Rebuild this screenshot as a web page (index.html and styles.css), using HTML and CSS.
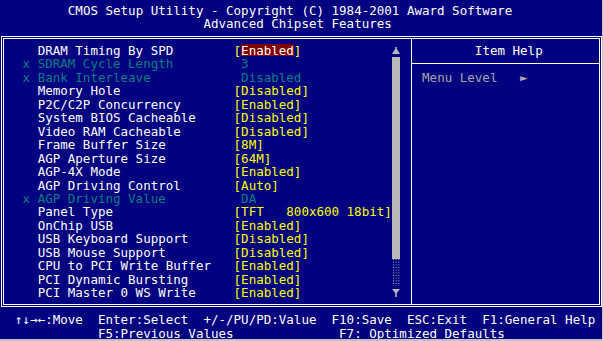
FILE: index.html
```html
<!DOCTYPE html>
<html>
<head>
<meta charset="utf-8">
<link rel="stylesheet" href="styles.css">
</head>
<body>
<div class="screen">
  <div class="t1">CMOS Setup Utility - Copyright (C) 1984-2001 Award Software</div>
  <div class="t2">Advanced Chipset Features</div>
  <div class="frame">
    <div class="list-panel">
      <div class="items">
        <div class="item"><span class="mk"></span><span>DRAM Timing By SPD</span><span class="val">[<span class="hl">Enabled</span>]</span></div>
        <div class="item dis"><span class="mk">x</span><span>SDRAM Cycle Length</span><span class="val off">3</span></div>
        <div class="item dis"><span class="mk">x</span><span>Bank Interleave</span><span class="val off">Disabled</span></div>
        <div class="item"><span class="mk"></span><span>Memory Hole</span><span class="val">[Disabled]</span></div>
        <div class="item"><span class="mk"></span><span>P2C/C2P Concurrency</span><span class="val">[Enabled]</span></div>
        <div class="item"><span class="mk"></span><span>System BIOS Cacheable</span><span class="val">[Disabled]</span></div>
        <div class="item"><span class="mk"></span><span>Video RAM Cacheable</span><span class="val">[Disabled]</span></div>
        <div class="item"><span class="mk"></span><span>Frame Buffer Size</span><span class="val">[8M]</span></div>
        <div class="item"><span class="mk"></span><span>AGP Aperture Size</span><span class="val">[64M]</span></div>
        <div class="item"><span class="mk"></span><span>AGP-4X Mode</span><span class="val">[Enabled]</span></div>
        <div class="item"><span class="mk"></span><span>AGP Driving Control</span><span class="val">[Auto]</span></div>
        <div class="item dis"><span class="mk">x</span><span>AGP Driving Value</span><span class="val off">DA</span></div>
        <div class="item"><span class="mk"></span><span>Panel Type</span><span class="val">[TFT   800x600 18bit]</span></div>
        <div class="item"><span class="mk"></span><span>OnChip USB</span><span class="val">[Enabled]</span></div>
        <div class="item"><span class="mk"></span><span>USB Keyboard Support</span><span class="val">[Disabled]</span></div>
        <div class="item"><span class="mk"></span><span>USB Mouse Support</span><span class="val">[Disabled]</span></div>
        <div class="item"><span class="mk"></span><span>CPU to PCI Write Buffer</span><span class="val">[Enabled]</span></div>
        <div class="item"><span class="mk"></span><span>PCI Dynamic Bursting</span><span class="val">[Enabled]</span></div>
        <div class="item"><span class="mk"></span><span>PCI Master 0 WS Write</span><span class="val">[Enabled]</span></div>
      </div>
      <div class="scroll">
        <div class="arrow"><svg width="8" height="7" viewBox="0 0 8 7"><polygon points="3.2,0 4.8,0 4.8,2 8,7 0,7 3.2,2" fill="#b8b8b8"/></svg></div>
        <div class="bar"></div>
        <div class="dots"><svg width="8" height="27" viewBox="0 0 8 27"><defs><pattern id="shade" x="1" y="0" width="2.67" height="2.67" patternUnits="userSpaceOnUse"><rect width="1" height="1" fill="#b8b8b8"/></pattern></defs><rect width="8" height="27" fill="url(#shade)"/></svg></div>
        <div class="arrow"><svg width="8" height="8" viewBox="0 0 8 8"><polygon points="0,0 8,0 4.8,4 4.8,8 3.2,8 3.2,4" fill="#b8b8b8"/></svg></div>
      </div>
    </div>
    <div class="help-panel">
      <div class="help-title">Item Help</div>
      <div class="help-rule"></div>
      <div class="help-text">Menu Level   ►</div>
    </div>
  </div>
  <div class="keys">
    <div class="keys-row"><span>↑↓→←:Move</span><span>Enter:Select</span><span>+/-/PU/PD:Value</span><span>F10:Save</span><span>ESC:Exit</span><span>F1:General Help</span></div>
    <div class="keys-row2"><span>F5:Previous Values</span><span>F7: Optimized Defaults</span></div>
  </div>
</div>
</body>
</html>
```

FILE: styles.css
```css
html {
  background: #c0c0c8;
}
body {
  margin: 0;
}
.screen {
  width: 602px;
  height: 339px;
  box-sizing: border-box;
  overflow: hidden;
  padding-top: 3.69px;
  background: #000080;
  color: #ffffff;
  font-family: "DejaVu Sans Mono", monospace;
  font-size: 12.52px;
  line-height: 13.46px;
}
.t1,
.t2,
.item span,
.help-text,
.keys span {
  white-space: pre;
}
.t1 {
  padding-left: 9ch;
}
.t2 {
  padding-left: 27ch;
}
.frame {
  display: grid;
  grid-template-columns: 407px 188px;
  width: 601px;
  height: 271px;
  box-sizing: border-box;
  border: 3px double #ffffff;
  margin: 5.39px 0 0 1px;
}
.list-panel {
  display: grid;
  grid-template-columns: 388px 8px;
  padding: 5.07px 11px 4.19px 0;
}
.item {
  display: grid;
  grid-template-columns: 2ch 26ch auto;
  padding-left: calc(3ch - 4px);
  height: 13.46px;
}
.item.dis {
  color: #008080;
}
.val {
  color: #ffff00;
}
.item.dis .val {
  color: #008080;
}
.val.off {
  padding-left: 1ch;
}
.hl {
  color: #ffffff;
  background: linear-gradient(#800000, #800000) 0 0.8px / 100% 12.4px no-repeat;
}
.scroll {
  display: flex;
  flex-direction: column;
}
.arrow {
  height: 13.46px;
  box-sizing: border-box;
  padding-top: 3px;
  display: flex;
  align-items: flex-start;
}
.arrow svg,
.dots svg {
  display: block;
}
.bar {
  height: 201.9px;
  background: #b8b8b8;
}
.dots {
  height: 26.92px;
  overflow: hidden;
}
.help-panel {
  border-left: 1px solid #ffffff;
  padding-top: 5.07px;
}
.help-title {
  padding-left: 62.86px;
  height: 13.46px;
}
.help-rule {
  border-top: 1px solid #ffffff;
  margin: 5.47px 0 6.99px;
}
.help-text {
  color: #a8a8a8;
  padding-left: 10.08px;
}
.keys {
  margin-top: 6.27px;
}
.keys-row {
  display: flex;
  gap: 2ch;
  padding-left: 2ch;
}
.keys-row2 {
  display: grid;
  grid-template-columns: 32ch auto;
  padding-left: 13ch;
  padding-top: 1.23px;
  line-height: 11px;
}
```
